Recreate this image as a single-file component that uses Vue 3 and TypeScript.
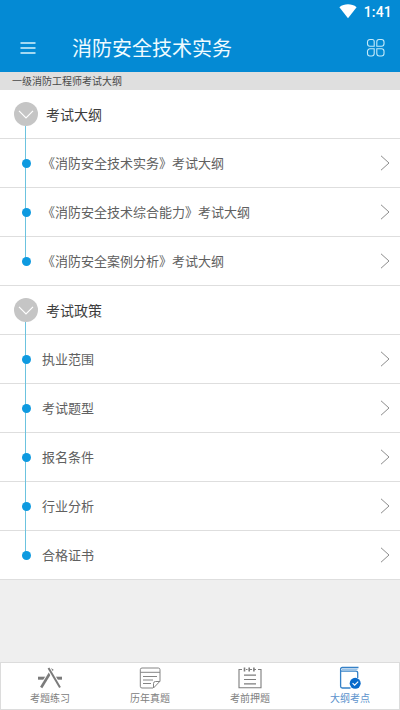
<script setup lang="ts">
interface Section {
  title: string
  items: string[]
}

const sections: Section[] = [
  {
    title: '考试大纲',
    items: ['《消防安全技术实务》考试大纲', '《消防安全技术综合能力》考试大纲', '《消防安全案例分析》考试大纲'],
  },
  {
    title: '考试政策',
    items: ['执业范围', '考试题型', '报名条件', '行业分析', '合格证书'],
  },
]
</script>

<template>
  <div class="screen">
    <header class="header">
      <div class="status">
        <svg class="wifi" width="18" height="15" viewBox="0 0 18 15">
          <path d="M0.4 3.2C5.2-.6 12.8-.6 17.6 3.2L9 14.2Z" fill="#fff" />
        </svg>
        <span class="clock">1:41</span>
      </div>
      <div class="bar">
        <svg class="menu" width="16" height="12" viewBox="0 0 16 12">
          <path d="M.5 1h15M.5 6h15M.5 11h15" stroke="#d9f3fb" stroke-width="1.3" />
        </svg>
        <h1 class="title">消防安全技术实务</h1>
        <svg class="apps" width="20" height="20" viewBox="0 0 20 20" fill="none" stroke="#c5eafa" stroke-width="1.1">
          <path d="M4 1.5h2.2a2 2 0 0 1 2 2v4.7H4a2.5 2.5 0 0 1-2.5-2.5V4A2.5 2.5 0 0 1 4 1.5Z" />
          <path d="M13 1.5h2.5A2.5 2.5 0 0 1 18 4v1.7a2.5 2.5 0 0 1-2.5 2.5h-4.7V3.7a2.2 2.2 0 0 1 2.2-2.2Z" />
          <path d="M4 10.8h4.2v4.7a2.5 2.5 0 0 1-2.5 2.5H4a2.5 2.5 0 0 1-2.5-2.5v-2.2A2.5 2.5 0 0 1 4 10.8Z" />
          <path d="M10.8 10.8h4.7a2.5 2.5 0 0 1 2.5 2.5v2.2a2.5 2.5 0 0 1-2.5 2.5h-2.2a2.5 2.5 0 0 1-2.5-2.5Z" />
        </svg>
      </div>
    </header>
    <div class="subject">一级消防工程师考试大纲</div>

    <main class="content">
      <section v-for="section in sections" :key="section.title">
        <div class="row">
          <div class="rail head">
            <svg width="24" height="24" viewBox="0 0 24 24">
              <circle cx="12" cy="12" r="12" fill="#c5c5c5" />
              <path d="M5 8.8l7 7 7-7" fill="none" stroke="#fff" stroke-width="1.2" />
            </svg>
            <i class="line"></i>
          </div>
          <h2 class="heading">{{ section.title }}</h2>
        </div>
        <div v-for="item in section.items" :key="item" class="row item">
          <div class="rail">
            <i class="line"></i>
            <i class="dot"></i>
            <i class="line lower"></i>
          </div>
          <span class="label">{{ item }}</span>
          <svg class="arrow" width="10" height="16" viewBox="0 0 10 16">
            <path d="M1 .8l8 7.2-8 7.2" fill="none" stroke="#8c8c8c" stroke-width="1" />
          </svg>
        </div>
      </section>
    </main>

    <nav class="tabs">
      <div class="tab">
        <svg width="24" height="24" viewBox="0 0 24 24" fill="none" stroke="#7b7b7b">
          <path d="M0 12.2h24" stroke-width="3" />
          <path d="M12 7L8 14h8Z" fill="#fff" stroke="none" />
          <path d="M14.5 3L3.2 21.5" stroke="#fff" stroke-width="4.4" />
          <path d="M14.5 3L3.2 21.5" stroke-width="2.6" />
          <path d="M10.5 2L22 21.5" stroke="#fff" stroke-width="4.2" />
          <path d="M10.5 2L22 21.5" stroke-width="2" />
        </svg>
        <span>考题练习</span>
      </div>
      <div class="tab">
        <svg width="24" height="24" viewBox="0 0 24 24" fill="none" stroke="#858585" stroke-width="1">
          <path d="M15 22H4a1.7 1.7 0 0 1-1.7-1.7V3.7A1.7 1.7 0 0 1 4 2h16.3A1.7 1.7 0 0 1 22 3.7v11.5L15.5 22v-4.5a2 2 0 0 1 2-2H22M2.3 6.3H22" />
          <path d="M5 10.5h14M5 14h10M5 17.5h8" stroke-width="1.2" />
        </svg>
        <span>历年真题</span>
      </div>
      <div class="tab">
        <svg width="24" height="24" viewBox="0 0 24 24" fill="none" stroke="#7d7d7d">
          <path d="M4 3.5H1v18.3h22V3.5h-3M8 3.5h1.5M12 3.5h2M16 3.5h2" stroke-width="1.1" />
          <path d="M6.5 1.5v4M11.2 1.5v4M15.9 1.5v4" stroke-width="1.6" />
          <path d="M6 9.2h12M6 13.5h12M6 17.8h12" stroke-width="1.2" />
        </svg>
        <span>考前押题</span>
      </div>
      <div class="tab active">
        <svg width="24" height="24" viewBox="0 0 24 24" fill="none" stroke="#3581c7">
          <path d="M12.5 22H4.3a1.7 1.7 0 0 1-1.7-1.7V3.2c0-1 .7-1.7 1.7-1.7H20.5M2.6 5.2h15.2c1.2 0 1.9.7 1.9 1.8v5" stroke-width="1.3" />
          <path d="M4 3.3h15.5" stroke="#83b5e2" />
          <circle cx="17.2" cy="17.3" r="5.5" fill="#086acb" stroke="none" />
          <path d="M14.6 17.2l2 2 3.6-3.6" stroke="#fff" stroke-width="1.1" />
        </svg>
        <span>大纲考点</span>
      </div>
    </nav>
  </div>
</template>

<style>
body {
  margin: 0;
}
</style>

<style scoped>
.screen {
  display: flex;
  flex-direction: column;
  width: 400px;
  height: 710px;
  overflow: hidden;
  background: #efefef;
  font-family: "Noto Sans CJK SC", sans-serif;
}
.header {
  height: 72px;
  flex: none;
  background: #048ad4;
  color: #fff;
}
.status {
  display: flex;
  height: 24px;
  box-sizing: border-box;
  justify-content: flex-end;
  align-items: center;
  padding-right: 8px;
  gap: 7px;
}
.wifi {
  margin-top: -1px;
}
.clock {
  font: 500 14px/24px Roboto, sans-serif;
  letter-spacing: 0.2px;
}
.bar {
  display: flex;
  height: 48px;
  align-items: center;
  padding: 0 14px 0 20px;
}
.title {
  flex: 1;
  margin: 0 0 0 36px;
  font-size: 20px;
  font-weight: 400;
  line-height: 48px;
  color: #effbff;
}
.subject {
  flex: none;
  height: 18px;
  padding-left: 12px;
  background: #dfdfdf;
  color: #4a4a4a;
  font-size: 10px;
  line-height: 18px;
}
.content {
  flex: 1;
}
.row {
  display: flex;
  height: 49px;
  box-sizing: border-box;
  align-items: center;
  background: linear-gradient(#dedede, #dedede) bottom / 100% 1px no-repeat #fff;
}
.rail {
  display: flex;
  flex-direction: column;
  align-items: center;
  width: 24px;
  height: 49px;
  margin-left: 14px;
}
.head {
  box-sizing: border-box;
  padding-top: 12px;
}
.head svg {
  flex: none;
}
.line {
  flex: 1;
  width: 1px;
  margin-right: 1px;
  background: #6cc3df;
}
.dot {
  width: 9px;
  height: 9px;
  margin: -1px 0;
  border-radius: 50%;
  background: #0e9ae0;
  z-index: 1;
}
.item:last-child .lower {
  background: transparent;
}
.heading {
  margin: 0 0 0 8px;
  padding-bottom: 2px;
  font-size: 14px;
  font-weight: 400;
  line-height: 46px;
  color: #3c3c3c;
}
.label {
  flex: 1;
  margin-left: 4px;
  padding-bottom: 2px;
  font-size: 13px;
  line-height: 46px;
  color: #606060;
}
.arrow {
  margin: -1px 10px 0 0;
}
.tabs {
  display: flex;
  flex: none;
  height: 48px;
  box-shadow: inset 0 0 0 1px #dcdcdc;
  background: #fff;
}
.tab {
  display: flex;
  flex: 1;
  flex-direction: column;
  align-items: center;
  padding-top: 4px;
  color: #808080;
  font-size: 10px;
  line-height: 16px;
}
.tab svg {
  flex: none;
}
.active {
  color: #5c92cc;
}
</style>
